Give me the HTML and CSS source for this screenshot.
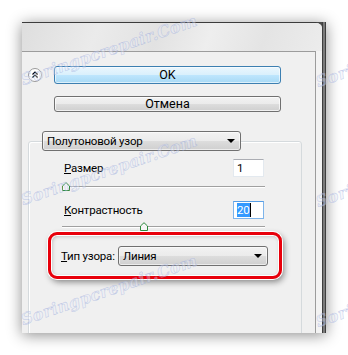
FILE: index.html
```html
<!DOCTYPE html>
<html>
<head>
<meta charset="utf-8">
<link rel="stylesheet" href="styles.css">
</head>
<body>
<div class="stage">
  <div class="window">
    <div class="main">
      <div class="titlebar"></div>
      <div class="lower">
        <div class="panel">
          <div class="row-ok">
            <div class="chevron">
              <svg width="14" height="14" viewBox="0 0 14 14"><circle cx="7" cy="7" r="6.5" fill="#fff" stroke="#9a9a9a"/><path d="M4.5 6.5 L7 4 L9.5 6.5 M4.5 9.5 L7 7 L9.5 9.5" fill="none" stroke="#000" stroke-width="1.2"/></svg>
            </div>
            <button class="btn btn-default">OK</button>
          </div>
          <button class="btn btn-cancel">Отмена</button>
          <div class="group">
            <div class="select select-top"><span>Полутоновой узор</span><i class="arrow"></i></div>
            <div class="field">
              <span class="label"><u>Р</u>азмер</span>
              <span class="input">1</span>
            </div>
            <div class="slider">
              <svg class="thumb" style="left:0px" width="8" height="9" viewBox="0 0 8 9"><path d="M0.5 8.5 V4 L4 0.7 L7.5 4 V8.5 Z" fill="#f6f6f6" stroke="#2e8b3d"/></svg>
            </div>
            <div class="field field-2">
              <span class="label"><u>К</u>онтрастность</span>
              <span class="input input-focus"><span class="sel">20</span></span>
            </div>
            <div class="slider slider-2">
              <svg class="thumb" style="left:78px" width="8" height="9" viewBox="0 0 8 9"><path d="M0.5 8.5 V4 L4 0.7 L7.5 4 V8.5 Z" fill="#f6f6f6" stroke="#2e8b3d"/></svg>
            </div>
            <div class="highlight">
              <span class="label label-type"><u>Т</u>ип узора:</span>
              <div class="select select-type"><span>Линия</span><i class="arrow"></i></div>
            </div>
          </div>
        </div>
        <div class="gutter"></div>
      </div>
    </div>
    <div class="edge"></div>
  </div>
  <div class="wm wm1">Soringpcrepair.Com</div>
  <div class="wm wm2">Soringpcrepair.Com</div>
  <div class="wm wm3">Soringpcrepair.Com</div>
  <div class="wm wm4">Soringpcrepair.Com</div>
  <div class="wm wm5">Soringpcrepair.Com</div>
  <div class="wm wm6">Soringpcrepair.Com</div>
</div>
</body>
</html>
```

FILE: styles.css
```css
html, body {
  margin: 0;
  padding: 0;
  background: #fff;
  width: 348px;
  height: 355px;
  overflow: hidden;
  font-family: Roboto, "Noto Sans", sans-serif;
  font-size: 11px;
  letter-spacing: -0.2px;
  color: #000;
}
.stage {
  position: relative;
  padding: 22px 0 0 22px;
  width: 326px;
  height: 333px;
  overflow: hidden;
}
.window {
  display: flex;
  width: 304px;
  height: 311px;
  background: #4a4a4a;
  box-shadow: 0 2px 14px rgba(0,0,0,0.45);
}
.main {
  width: 300px;
  display: flex;
  flex-direction: column;
  background: #f0f0f0;
  border-top: 1px solid #3c3c3c;
  border-top-right-radius: 6px;
  overflow: hidden;
}
.edge {
  width: 4px;
  background: linear-gradient(to right, #3e3e3e 0, #3e3e3e 1px, #7a7a7a 1px, #7a7a7a 3px, #3e3e3e 3px);
}
.titlebar {
  height: 28px;
  flex: none;
  background: linear-gradient(110deg, #dedede 0%, #ebebeb 25%, #e2e2e2 45%, #eeeeee 62%, #e4e4e4 80%, #ececec 100%);
}
.lower {
  flex: 1;
  display: flex;
  min-height: 0;
}
.panel {
  flex: 1;
  border-top: 1px solid #9c9c9c;
  border-right: 1px solid #9c9c9c;
  background: #f0f0f0;
  display: flex;
  flex-direction: column;
  align-items: flex-start;
  overflow: hidden;
}
.gutter {
  width: 6px;
  background: #f3f3f3;
}
.row-ok {
  display: flex;
  align-items: center;
  margin-top: 14px;
  height: 18px;
}
.chevron {
  width: 14px;
  height: 14px;
  margin-left: 6px;
  margin-right: 12px;
  display: flex;
}
.btn {
  font: inherit;
  font-size: 12.5px;
  letter-spacing: 0;
  width: 227px;
  height: 18px;
  padding: 0;
  border-radius: 3px;
  line-height: 14px;
  color: #000;
}
.btn-default {
  border: 1px solid #3c7fb1;
  background: linear-gradient(to bottom, #eaf6fd 0%, #d9f0fc 50%, #bee6fd 51%, #a7d9f5 100%);
  box-shadow: inset 0 0 0 1px rgba(255,255,255,0.6);
}
.btn-cancel {
  margin-top: 12px;
  margin-left: 32px;
  border: 1px solid #707070;
  background: linear-gradient(to bottom, #f2f2f2 0%, #ebebeb 50%, #dddddd 51%, #cfcfcf 100%);
  box-shadow: inset 0 0 0 1px rgba(255,255,255,0.7);
}
.group {
  margin-top: 29px;
  margin-left: 6px;
  width: 272px;
  height: 200px;
  flex: none;
  border: 1px solid #d5dadd;
  border-radius: 3px;
  box-shadow: inset 1px 1px 0 #fff;
  display: flex;
  flex-direction: column;
  align-items: flex-start;
}
.select {
  box-sizing: border-box;
  height: 20px;
  border: 1px solid #707070;
  border-radius: 3px;
  background: linear-gradient(to bottom, #f2f2f2 0%, #ebebeb 50%, #dddddd 51%, #cfcfcf 100%);
  box-shadow: inset 0 0 0 1px rgba(255,255,255,0.6);
  display: flex;
  align-items: center;
  justify-content: space-between;
  padding: 0 5px 0 4px;
  line-height: 16px;
  font-size: 11.5px;
}
.arrow {
  width: 0;
  height: 0;
  border-left: 4px solid transparent;
  border-right: 4px solid transparent;
  border-top: 4px solid #000;
}
.select-top {
  margin-top: -11px;
  margin-left: 13px;
  width: 199px;
}
.field {
  margin-top: 8px;
  margin-left: 35px;
  width: 200px;
  height: 18px;
  display: flex;
  align-items: center;
  justify-content: space-between;
  font-size: 11.5px;
}
.field-2 {
  margin-top: 10px;
}
.label {
  line-height: 16px;
}
.input {
  box-sizing: border-box;
  width: 31px;
  height: 18px;
  background: #fff;
  border: 1px solid #e3e9ef;
  border-top-color: #abadb3;
  padding-left: 3px;
  line-height: 16px;
}
.input-focus {
  border-color: #7eb4ea;
  border-top-color: #569de5;
}
.sel {
  background: #3399ff;
  color: #fff;
  border-right: 1px solid #000;
}
.slider {
  position: relative;
  margin-top: 5px;
  margin-left: 33px;
  width: 203px;
  height: 9px;
  flex: none;
}
.slider::before {
  content: "";
  position: absolute;
  left: 0;
  right: 0;
  top: 4px;
  height: 1px;
  background: #a0a0a0;
  box-shadow: 0 1px 0 #fff;
}
.slider-2 {
  margin-top: 3px;
}
.thumb {
  position: absolute;
  top: 0;
  display: block;
}
.highlight {
  box-sizing: border-box;
  margin-top: 1px;
  margin-left: 19px;
  width: 234px;
  height: 47px;
  border: 3px solid #e8000b;
  border-radius: 9px;
  box-shadow: 0 0 0 1px #fff, 2px 3px 6px rgba(0,0,0,0.45), inset 0 0 0 1px #fff, inset 1px 1px 4px rgba(0,0,0,0.25);
  display: flex;
  align-items: center;
  padding-left: 10px;
  font-size: 11.5px;
}
.label-type {
  width: 57px;
  flex: none;
  white-space: nowrap;
}
.select-type {
  width: 150px;
  margin-top: 1px;
}
.wm {
  position: absolute;
  font-family: "DejaVu Serif", serif;
  font-style: italic;
  font-weight: bold;
  font-size: 16px;
  line-height: 20px;
  letter-spacing: 0.3px;
  color: rgba(232,236,250,0.35);
  -webkit-text-stroke: 0.5px rgba(140,158,215,0.5);
  transform: rotate(-19deg);
  transform-origin: left bottom;
  white-space: nowrap;
  pointer-events: none;
}
.wm1 { left: 25px; top: 70px; }
.wm2 { left: 25px; top: 190px; }
.wm3 { left: 25px; top: 310px; }
.wm4 { left: 320px; top: 72px; }
.wm5 { left: 320px; top: 192px; }
.wm6 { left: 320px; top: 312px; }
```
